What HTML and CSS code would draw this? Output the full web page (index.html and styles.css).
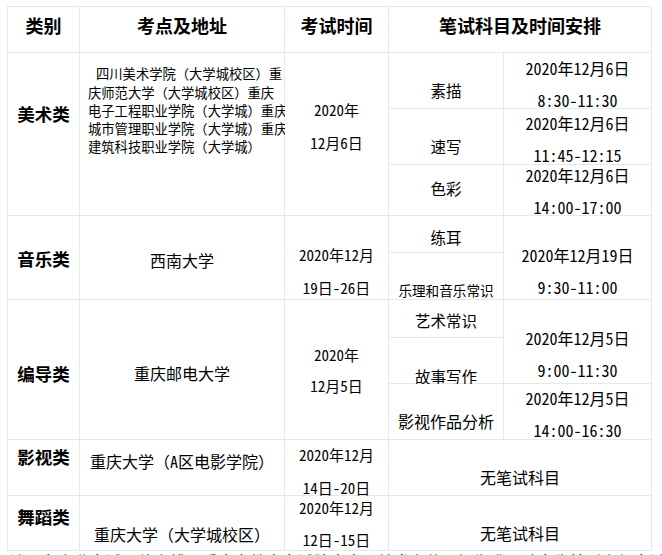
FILE: index.html
```html
<!DOCTYPE html>
<html lang="zh-CN">
<head>
<meta charset="utf-8">
<title>考点安排</title>
<link rel="stylesheet" href="styles.css">
</head>
<body>
<div class="page">
  <div class="grid">
    <div class="cell head pb10">类别</div>
    <div class="cell head pb10">考点及地址</div>
    <div class="cell head pb10">考试时间</div>
    <div class="cell head span-c2 pb10">笔试科目及时间安排</div>

    <div class="cell label span-r3 pb40">美术类</div>
    <div class="cell addr span-r3">
      <span class="first">四川美术学院（大学城校区）重</span>
      <span>庆师范大学（大学城校区）重庆</span>
      <span>电子工程职业学院（大学城）重庆</span>
      <span>城市管理职业学院（大学城）重庆</span>
      <span>建筑科技职业学院（大学城）</span>
    </div>
    <div class="cell two t33 small span-r3 pb16"><span>2020年</span><span>12月6日</span></div>
    <div class="cell subj pt18">素描</div>
    <div class="cell two t32 pt7"><span>2020年12月6日</span><span>8:30-11:30</span></div>
    <div class="cell subj pt18">速写</div>
    <div class="cell two t32 pt5"><span>2020年12月6日</span><span>11:45-12:15</span></div>
    <div class="cell subj pb5">色彩</div>
    <div class="cell two t32 pt2"><span>2020年12月6日</span><span>14:00-17:00</span></div>

    <div class="cell label span-r2 pt3">音乐类</div>
    <div class="cell name span-r2 pt4">西南大学</div>
    <div class="cell two t33 small span-r2 pt27"><span>2020年12月</span><span>19日-26日</span></div>
    <div class="cell subj pt5">练耳</div>
    <div class="cell two t32 span-r2 pt26"><span>2020年12月19日</span><span>9:30-11:00</span></div>
    <div class="cell subj narrow pt27">乐理和音乐常识</div>

    <div class="cell label span-r3 pt9">编导类</div>
    <div class="cell name span-r3 pt6">重庆邮电大学</div>
    <div class="cell two t30 small span-r3 pt2"><span>2020年</span><span>12月5日</span></div>
    <div class="cell subj pt3">艺术常识</div>
    <div class="cell two t32 span-r2 pt25"><span>2020年12月5日</span><span>9:00-11:30</span></div>
    <div class="cell subj pt30">故事写作</div>
    <div class="cell subj wide pt18">影视作品分析</div>
    <div class="cell two t32 pt5"><span>2020年12月5日</span><span>14:00-16:30</span></div>

    <div class="cell label pb21">影视类</div>
    <div class="cell name pb14">重庆大学（A区电影学院）</div>
    <div class="cell two t33 small pt7"><span>2020年12月</span><span>14日-20日</span></div>
    <div class="cell name span-c2 pt19">无笔试科目</div>

    <div class="cell label pb12">舞蹈类</div>
    <div class="cell name pt22">重庆大学（大学城校区）</div>
    <div class="cell two t32 small pt2"><span>2020年12月</span><span>12日-15日</span></div>
    <div class="cell name span-c2 pt20">无笔试科目</div>
  </div>
  <p class="note">注：各专业考试具体安排以重庆市教育考试院官方网站发布的通知为准，请考生按时参加考试。</p>
</div>
</body>
</html>
```

FILE: styles.css
```css
html, body {
  margin: 0;
  padding: 0;
  background: #ffffff;
}

body {
  font-family: "Noto Sans Mono CJK SC", "Noto Sans CJK SC", sans-serif;
  color: #000000;
  font-size: 16px;
  overflow: hidden;
}

.page {
  padding: 6px 0 0 7px;
}

.grid {
  display: grid;
  grid-template-columns: 71px 204px 103px 114px 147px;
  grid-template-rows: 45px 55px 55px 50px 36px 46px 37px 45px 55px 55px 54px;
  gap: 1px;
  padding: 1px;
  background: #e8e8e8;
  width: max-content;
}

.cell {
  background: #ffffff;
  display: flex;
  flex-direction: column;
  justify-content: center;
  align-items: center;
  text-align: center;
  line-height: 20px;
  white-space: nowrap;
  min-width: 0;
  min-height: 0;
  box-sizing: border-box;
}

.span-c2 { grid-column: span 2; }
.span-r2 { grid-row: span 2; }
.span-r3 { grid-row: span 3; }

.head {
  font-family: "Noto Sans CJK SC", sans-serif;
  font-weight: 700;
  font-size: 18px;
}

.label {
  font-family: "Noto Sans CJK SC", sans-serif;
  font-weight: 700;
  font-size: 17.5px;
}

.name { font-size: 16px; }

.subj { font-size: 15.5px; }
.subj.narrow { font-size: 13.6px; }
.subj.wide { font-size: 16px; }

.addr {
  align-items: flex-start;
  text-align: left;
  font-size: 13.3px;
  line-height: 18.25px;
  padding: 0 0 46px 8px;
  overflow: visible;
}
.addr .first { padding-left: 8px; }

.two { font-size: 16px; line-height: 16px; }
.two.small { font-size: 15px; }
.t30 { gap: 14.5px; }
.t32 { gap: 16px; }
.t33 { gap: 17px; }

.pt1 { padding-top: 1px; }
.pt2 { padding-top: 2px; }
.pt3 { padding-top: 3px; }
.pt4 { padding-top: 4px; }
.pt5 { padding-top: 5px; }
.pt6 { padding-top: 6px; }
.pt7 { padding-top: 7px; }
.pt9 { padding-top: 9px; }
.pt18 { padding-top: 18px; }
.pt19 { padding-top: 19px; }
.pt20 { padding-top: 20px; }
.pt22 { padding-top: 22px; }
.pt25 { padding-top: 25px; }
.pt26 { padding-top: 26px; }
.pt27 { padding-top: 27px; }
.pt30 { padding-top: 30px; }

.pb5 { padding-bottom: 5px; }
.pb10 { padding-bottom: 10px; }
.pb12 { padding-bottom: 12px; }
.pb14 { padding-bottom: 14px; }
.pb16 { padding-bottom: 16px; }
.pb21 { padding-bottom: 21px; }
.pb40 { padding-bottom: 40px; }

.note {
  margin: 0;
  padding: 2px 0 0 3px;
  font-size: 16px;
  line-height: 16px;
  white-space: nowrap;
}
```
